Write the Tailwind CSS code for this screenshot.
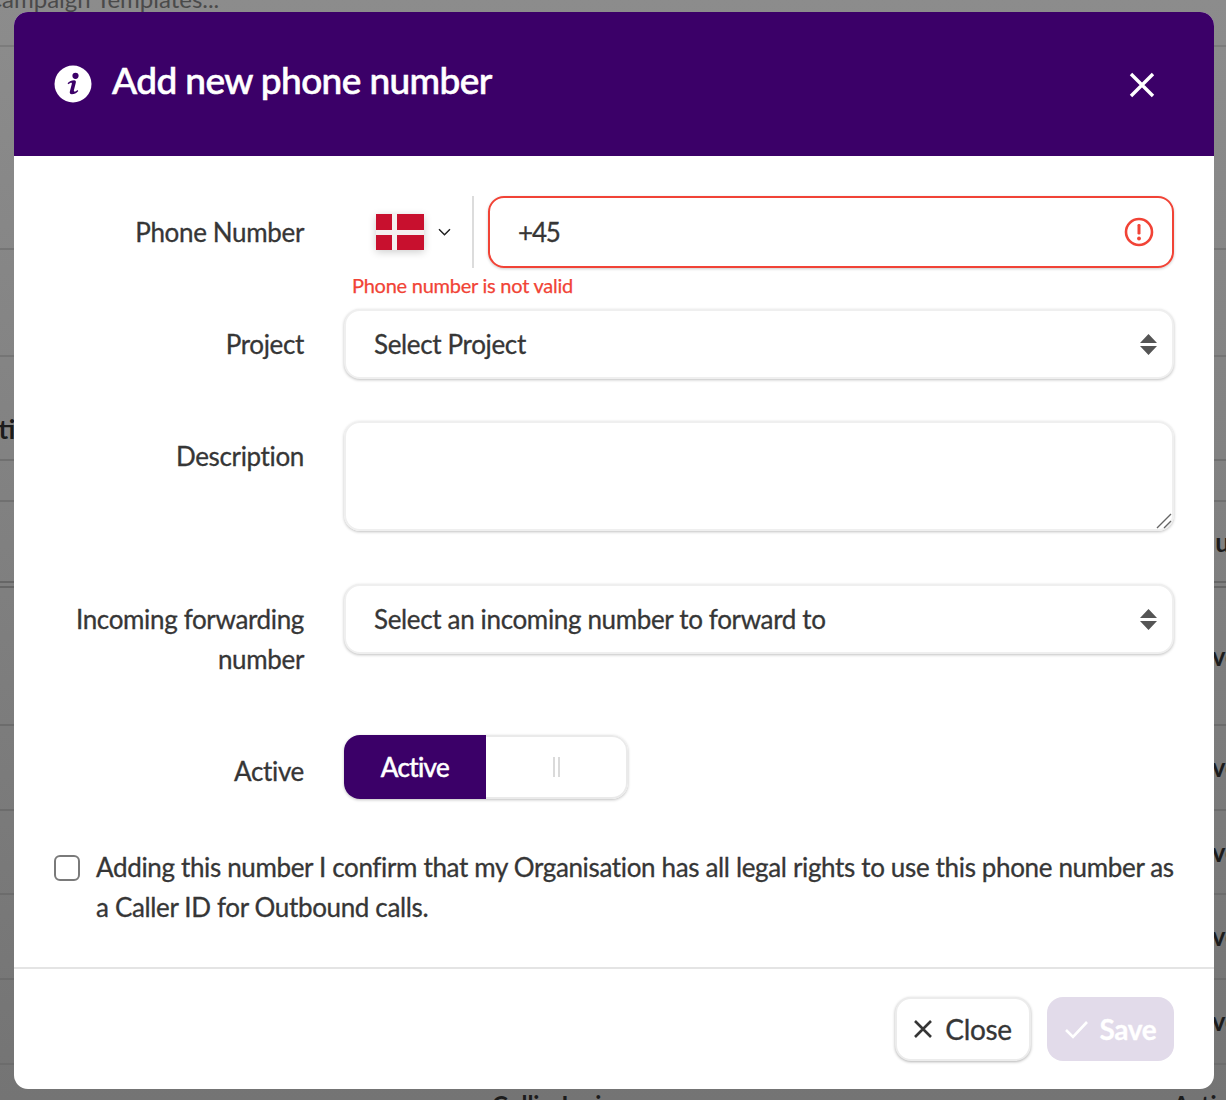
<!DOCTYPE html>
<html>
<head>
<meta charset="utf-8">
<title>Add new phone number</title>
<script src="https://cdn.jsdelivr.net/npm/@tailwindcss/browser@4"></script>
</head>
<body class="font-['Lato',sans-serif]">
<div class="relative w-[1226px] h-[1100px] overflow-hidden bg-linear-to-b from-[#8c8c8c] to-[#747474] text-[#1c1c1c]">
  <!-- page behind the overlay -->
  <div class="text-[24px] text-[#4a4a4a] leading-none -mt-[13px] h-[60px] whitespace-nowrap -ml-[14px] border-b-2 border-[#7c7c7c]">Campaign Templates...</div>
  <div class="h-[203px] border-b-2 border-[#757575]"></div>
  <div class="h-[107px] border-b-2 border-[#757575]"></div>
  <div class="h-[104px] border-b-2 border-[#707070] flex items-end pb-[17px] text-[26px] font-bold leading-none -ml-[14px]">cti</div>
  <div class="h-[41px] border-b-2 border-[#707070]"></div>
  <div class="h-[81px] border-b-2 border-[#666666] flex justify-end items-center text-[26px] font-bold -mr-[4px] pt-[2px]">u</div>
  <div class="h-[5px] border-b-2 border-[#666666]"></div>
  <div class="h-[138px] border-b-2 border-[#6c6c6c] flex justify-end items-center text-[26px] font-bold -mr-[13px]">ve</div>
  <div class="h-[85px] border-b-2 border-[#6c6c6c] flex justify-end items-center text-[26px] font-bold -mr-[13px]">ve</div>
  <div class="h-[84px] border-b-2 border-[#6c6c6c] flex justify-end items-center text-[26px] font-bold -mr-[13px]">ve</div>
  <div class="h-[85px] border-b-2 border-[#6c6c6c] flex justify-end items-center text-[26px] font-bold -mr-[13px]">ve</div>
  <div class="h-[85px] border-b-2 border-[#6c6c6c] flex justify-end items-center text-[26px] font-bold -mr-[13px]">ve</div>
  <div class="flex h-[40px] pt-[28px] text-[24px] font-bold leading-none whitespace-nowrap"><span class="ml-[492px] w-[101px]">Collin Juni</span><span class="ml-[580px]">Active</span></div>

  <!-- modal -->
  <div class="absolute left-[14px] top-[12px] w-[1200px] h-[1077px] bg-white rounded-[14px] overflow-hidden text-[#363636] text-[26px] leading-[40px] tracking-[-0.35px] [-webkit-text-stroke:0.3px] flex flex-col">
    <header class="h-[144px] bg-[#3b0068] text-white flex items-center pl-[40px] pr-[59px] shrink-0">
      <svg class="w-[38px] h-[38px] mr-[20px] shrink-0" viewBox="0 0 38 38"><circle cx="19" cy="19" r="18.5" fill="#fff"/><circle cx="21.5" cy="10.8" r="3.1" fill="#3b0068"/><path d="M13.5 18.3c1.8-2 4.2-3.1 6.6-3.1 1.6 0 2.1 1 1.7 2.6l-1.9 7.4c-.2.9.1 1.3.7 1.3.9 0 1.8-.6 2.7-1.6l1 1c-1.9 2.3-4.1 3.3-6.4 3.3-1.8 0-2.5-1.1-2-3l1.9-7.3c.2-.8 0-1.2-.6-1.2-.7 0-1.6.5-2.6 1.5z" fill="#3b0068"/></svg>
      <h1 class="text-[37px] leading-[48px] font-medium tracking-[-0.6px] [-webkit-text-stroke:0.6px] -mt-[8px]">Add new phone number</h1>
      <svg class="w-[26px] h-[26px] ml-auto mt-[2px]" viewBox="0 0 26 26" fill="none" stroke="#fff" stroke-width="3.4"><path d="M2 2 L24 24 M24 2 L2 24"/></svg>
    </header>

    <form class="flex-1 flex flex-col">
      <div class="pt-[40px] pr-[40px] pl-[40px] h-[811px] shrink-0">
        <!-- phone -->
        <div class="flex h-[113px]">
          <label class="w-[250px] pr-0 pt-[16px] text-right shrink-0">Phone Number</label>
          <div class="ml-[40px] flex-1">
            <div class="flex h-[72px]">
              <div class="w-[130px] h-[72px] border-r-2 border-[#dcdcdc] flex items-center pl-[32px] shrink-0">
                <svg class="w-[48px] h-[36px] shadow-[0_2px_8px_rgba(0,0,0,0.2)]" viewBox="0 0 48 36"><rect width="48" height="36" fill="#c8102e"/><rect x="16" width="5" height="36" fill="#f4f0f0"/><rect y="16" width="48" height="5" fill="#f4f0f0"/></svg>
                <svg class="w-[13px] h-[8px] ml-[14px]" viewBox="0 0 13 8" fill="none" stroke="#222" stroke-width="1.5"><path d="M1 1.2 L6.5 6.7 L12 1.2"/></svg>
              </div>
              <div class="relative ml-[14px] flex-1">
                <input type="text" value="+45" class="w-full h-[72px] border-2 border-[#f14336] rounded-[16px] pl-[28px] pr-[60px] text-[26px] tracking-[-1.2px] text-[#363636] outline-none shadow-[0_1px_3px_rgba(0,0,0,0.2)]">
                <svg class="absolute right-[20px] top-[21px] w-[30px] h-[30px]" viewBox="0 0 30 30" fill="none"><circle cx="15" cy="15" r="13" stroke="#f14336" stroke-width="2.6"/><rect x="13.5" y="7" width="3" height="10.5" rx="1.2" fill="#f14336"/><circle cx="15" cy="21.5" r="1.9" fill="#f14336"/></svg>
              </div>
            </div>
            <p class="pl-[8px] text-[20px] leading-[28px] mt-[4px] -translate-y-px text-[#f14336] tracking-[-0.25px] [-webkit-text-stroke:0.25px]">Phone number is not valid</p>
          </div>
        </div>
        <!-- project -->
        <div class="flex h-[112px]">
          <label class="w-[250px] pt-[15px] text-right shrink-0">Project</label>
          <div class="ml-[40px] flex-1 relative h-[70px]">
            <select class="appearance-none w-full h-[70px] border-2 border-[#efefef] rounded-[16px] pl-[28px] text-[26px] text-[#363636] bg-white outline-none shadow-[0_1px_3px_rgba(0,0,0,0.25)]"><option>Select Project</option></select>
            <svg class="absolute right-[17px] top-[25px] w-[17px] h-[21px] pointer-events-none" viewBox="0 0 17 21" fill="#555"><path d="M8.5 0 L17 9 H0 Z M0 12 H17 L8.5 21 Z"/></svg>
          </div>
        </div>
        <!-- description -->
        <div class="flex h-[163px]">
          <label class="w-[250px] pt-[15px] text-right shrink-0">Description</label>
          <div class="ml-[40px] flex-1 relative h-[110px]">
            <textarea class="block w-full h-[110px] border-2 border-[#efefef] rounded-[16px] px-[28px] py-[12px] text-[26px] outline-none resize-none shadow-[0_1px_3px_rgba(0,0,0,0.25)]"></textarea>
            <svg class="absolute right-[2px] bottom-[2px] w-[16px] h-[16px] pointer-events-none" viewBox="0 0 16 16" fill="none" stroke="#666" stroke-width="1.4"><path d="M1 15 L15 1 M8 15 L15 8"/></svg>
          </div>
        </div>
        <!-- forwarding -->
        <div class="flex h-[151px]">
          <label class="w-[250px] pt-[15px] text-right shrink-0">Incoming forwarding number</label>
          <div class="ml-[40px] flex-1 relative h-[70px]">
            <select class="appearance-none w-full h-[70px] border-2 border-[#efefef] rounded-[16px] pl-[28px] text-[26px] text-[#363636] bg-white outline-none shadow-[0_1px_3px_rgba(0,0,0,0.25)]"><option>Select an incoming number to forward to</option></select>
            <svg class="absolute right-[17px] top-[25px] w-[17px] h-[21px] pointer-events-none" viewBox="0 0 17 21" fill="#555"><path d="M8.5 0 L17 9 H0 Z M0 12 H17 L8.5 21 Z"/></svg>
          </div>
        </div>
        <!-- active -->
        <div class="flex h-[120px]">
          <label class="w-[250px] pt-[16px] text-right shrink-0">Active</label>
          <div class="ml-[40px] w-[284px] h-[64px] flex rounded-[16px] overflow-hidden shadow-[0_1px_3px_rgba(0,0,0,0.25)]">
            <div class="w-[142px] bg-[#3b0068] text-white tracking-[-0.6px] [-webkit-text-stroke:0.6px] flex items-center justify-center pb-[1px]">Active</div>
            <div class="flex-1 flex items-center justify-center gap-[3px] border-2 border-l-0 border-[#eaeaea] rounded-r-[16px]">
              <span class="w-[2px] h-[20px] bg-[#dadada]"></span><span class="w-[2px] h-[20px] bg-[#dadada]"></span>
            </div>
          </div>
        </div>
        <!-- confirm -->
        <label class="flex">
          <input type="checkbox" class="appearance-none w-[26px] h-[26px] border-2 border-[#7a7a7a] rounded-[6px] shrink-0 bg-white">
          <span class="ml-[16px] -mt-[8px]">Adding this number I confirm that my Organisation has all legal rights to use this phone number as a Caller ID for Outbound calls.</span>
        </label>
      </div>
      <footer class="flex-1 border-t-2 border-[#e4e4e4] flex justify-end items-start pt-[28px] pr-[40px] gap-[16px]">
        <button type="button" class="w-[136px] h-[64px] rounded-[16px] border-2 border-[#ececec] bg-white flex items-center justify-center text-[#363636] text-[28px] shadow-[0_1px_3px_rgba(0,0,0,0.3)]">
          <svg class="w-[18px] h-[18px] mr-[13px]" viewBox="0 0 18 18" fill="none" stroke="#363636" stroke-width="2.6"><path d="M1 1 L17 17 M17 1 L1 17"/></svg>Close
        </button>
        <button type="button" class="w-[127px] h-[64px] rounded-[16px] bg-[#e2dbea] flex items-center justify-center text-white text-[28px] font-bold">
          <svg class="w-[23px] h-[19px] mr-[12px]" viewBox="0 0 23 19" fill="none" stroke="#fff" stroke-width="2.6"><path d="M1 10 L8 17 L22 2"/></svg>Save
        </button>
      </footer>
    </form>
  </div>
</div>
</body>
</html>
